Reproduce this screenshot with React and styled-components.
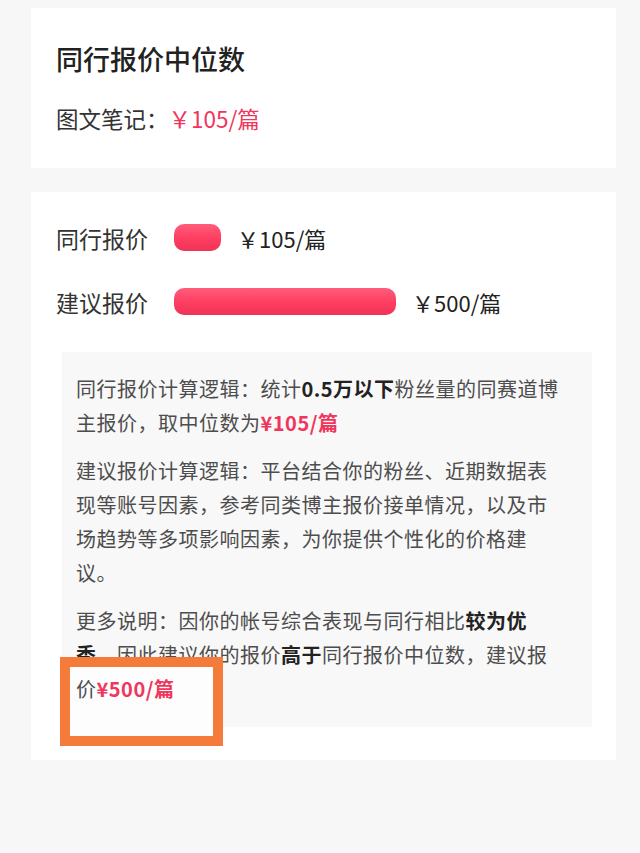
import React from "react";
import styled, { createGlobalStyle } from "styled-components";

const GlobalStyle = createGlobalStyle`
  html, body {
    margin: 0;
    padding: 0;
    background: #f7f7f7;
  }
  body {
    font-family: "Noto Sans CJK SC", "Noto Sans", sans-serif;
    color: #333;
  }
`;

const Page = styled.div`
  padding: 8px 24px 40px 31px;
  display: flex;
  flex-direction: column;
  gap: 24px;
`;

const Card = styled.section`
  background: #fff;
  padding: ${(p) => p.$padding};
  display: flex;
  flex-direction: column;
`;

const Title = styled.h2`
  margin: 0;
  font-size: 27px;
  line-height: 36px;
  font-weight: 500;
  color: #222;
`;

const SubLine = styled.div`
  margin-top: 26px;
  font-size: 22.5px;
  line-height: 30px;
  color: #333;
`;

const Red = styled.span`
  color: #f0365c;
  font-weight: ${(p) => (p.$bold ? 600 : 400)};
`;

const Rows = styled.div`
  display: flex;
  flex-direction: column;
  gap: 37px;
`;

const Row = styled.div`
  display: flex;
  align-items: center;
  height: 27px;
`;

const Label = styled.span`
  width: 118px;
  flex-shrink: 0;
  font-size: 23px;
  color: #333;
`;

const Bar = styled.div`
  height: 27px;
  border-radius: 10px;
  background: linear-gradient(180deg, #ff5d7a 0%, #fe3d60 55%, #ef3358 100%);
  margin-right: 16px;
`;

const Price = styled.span`
  font-size: 22px;
  color: #222;
`;

const Explain = styled.div`
  position: relative;
  margin: 37px -1px 0 6px;
  background: #f8f8f8;
  padding: 20px 28px 21px 14px;
  display: flex;
  flex-direction: column;
  gap: 14px;
`;

const Para = styled.p`
  margin: 0;
  font-size: 20px;
  letter-spacing: 0.5px;
  line-height: 34px;
  color: #4d4d4d;
`;

const Strong = styled.b`
  font-weight: 700;
  color: #222;
`;

const Lifted = styled.span`
  position: relative;
  z-index: 3;
`;

const Highlight = styled.div`
  position: absolute;
  left: -2px;
  top: 305px;
  width: 163px;
  height: 89px;
  box-sizing: border-box;
  border: 10px solid #f57b3b;
  background: #fdfdfd;
  z-index: 2;
  pointer-events: none;
`;

export default function App() {
  return (
    <>
      <GlobalStyle />
      <Page>
        <Card $padding="33px 25px 35px">
          <Title>同行报价中位数</Title>
          <SubLine>
            图文笔记：<Red>￥105/篇</Red>
          </SubLine>
        </Card>
        <Card $padding="32px 25px 33px">
          <Rows>
            <Row>
              <Label>同行报价</Label>
              <Bar style={{ width: 47 }} />
              <Price>￥105/篇</Price>
            </Row>
            <Row>
              <Label>建议报价</Label>
              <Bar style={{ width: 222 }} />
              <Price>￥500/篇</Price>
            </Row>
          </Rows>
          <Explain>
            <Para>
              同行报价计算逻辑：统计<Strong>0.5万以下</Strong>粉丝量的同赛道博主报价，取中位数为
              <Red $bold>¥105/篇</Red>
            </Para>
            <Para>
              建议报价计算逻辑：平台结合你的粉丝、近期数据表现等账号因素，参考同类博主报价接单情况，以及市场趋势等多项影响因素，为你提供个性化的价格建议。
            </Para>
            <Para>
              更多说明：因你的帐号综合表现与同行相比<Strong>较为优秀</Strong>，因此建议你的报价
              <Strong>高于</Strong>同行报价中位数，建议报
              <Lifted>
                价<Red $bold>¥500/篇</Red>
              </Lifted>
            </Para>
            <Highlight />
          </Explain>
        </Card>
      </Page>
    </>
  );
}
